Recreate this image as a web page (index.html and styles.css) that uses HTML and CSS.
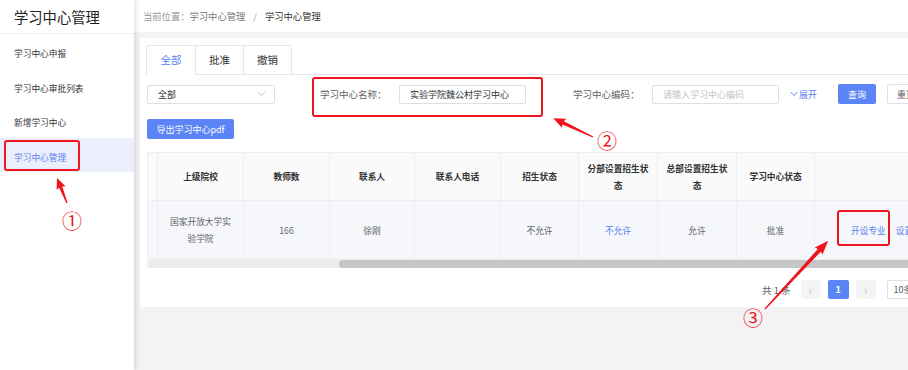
FILE: index.html
```html
<!DOCTYPE html>
<html lang="zh-CN">
<head>
  <meta charset="UTF-8">
  <title>学习中心管理</title>
  <meta name="viewport" content="width=device-width, initial-scale=1.0">
  <link rel="stylesheet" href="styles.css">
</head>
<body>
  <div class="layout">
    <aside class="sidebar">
      <div class="logo">学习中心管理</div>
      <ul class="menu">
        <li>学习中心申报</li>
        <li>学习中心审批列表</li>
        <li>新增学习中心</li>
        <li class="active">学习中心管理</li>
      </ul>
    </aside>

    <div class="main">
      <div class="crumb">
        <span class="crumb-label">当前位置：</span><span class="crumb-link">学习中心管理</span><span class="crumb-sep">/</span><span class="crumb-cur">学习中心管理</span>
      </div>

      <div class="content">
        <div class="card">
          <div class="tabs">
            <div class="tab-group">
              <div class="tab active">全部</div>
              <div class="tab">批准</div>
              <div class="tab">撤销</div>
            </div>
          </div>

          <div class="filters">
            <div class="select">
              <span>全部</span>
              <svg class="chev" width="9" height="6" viewBox="0 0 9 6"><path d="M1 1l3.5 3.5L8 1" fill="none" stroke="#c0c4cc" stroke-width="1"/></svg>
            </div>
            <div class="form-item name">
              <label>学习中心名称：</label>
              <div class="input">实验学院魏公村学习中心</div>
            </div>
            <div class="form-item code">
              <label>学习中心编码：</label>
              <div class="input placeholder">请输入学习中心编码</div>
            </div>
            <a class="expand"><svg width="8" height="6" viewBox="0 0 8 6"><path d="M0.5 1l3.5 3.5L7.5 1" fill="none" stroke="#5a7ef0" stroke-width="1"/></svg>展开</a>
            <button class="btn primary">查询</button>
            <button class="btn plain">重置</button>
          </div>

          <div class="toolbar">
            <button class="btn primary export">导出学习中心pdf</button>
          </div>

          <table class="grid">
            <colgroup>
              <col style="width:10px"><col style="width:86px"><col style="width:86px"><col style="width:85px"><col style="width:86px">
              <col style="width:78px"><col style="width:79px"><col style="width:79px"><col style="width:78px"><col style="width:150px">
            </colgroup>
            <thead>
              <tr>
                <th></th>
                <th>上级院校</th>
                <th>教师数</th>
                <th>联系人</th>
                <th>联系人电话</th>
                <th>招生状态</th>
                <th>分部设置招生状<br>态</th>
                <th>总部设置招生状<br>态</th>
                <th>学习中心状态</th>
                <th></th>
              </tr>
            </thead>
            <tbody>
              <tr>
                <td></td>
                <td>国家开放大学实<br>验学院</td>
                <td>166</td>
                <td>徐刚</td>
                <td></td>
                <td>不允许</td>
                <td><a class="link">不允许</a></td>
                <td>允许</td>
                <td>批准</td>
                <td class="ops"><a class="link">开设专业</a><a class="link">设置招生</a></td>
              </tr>
            </tbody>
          </table>
          <div class="scrollbar"><div class="thumb"></div></div>

          <div class="pager">
            <span class="total">共 1 条</span>
            <span class="pg-btn">&lsaquo;</span>
            <span class="pg-btn current">1</span>
            <span class="pg-btn">&rsaquo;</span>
            <span class="pg-size">10条/页</span>
          </div>
        </div>
      </div>
    </div>
  </div>

  <!-- 标注 -->
  <svg class="annot" width="908" height="370" viewBox="0 0 908 370">
    <g fill="none" stroke="#f0141e" stroke-width="2">
      <rect x="5" y="141" width="74" height="29" rx="2"/>
      <rect x="313" y="78" width="229" height="38" rx="2"/>
      <rect x="838" y="211" width="51" height="34" rx="2"/>
    </g>
    <g fill="#f0141e">
      <polygon transform="translate(67 203) rotate(-111.8)" points="0,-0.6 17,-1.7 16,-4.8 27,0 16,4.8 17,1.7 0,0.6"/>
      <polygon transform="translate(593 137) rotate(-154.6)" points="0,-0.6 33,-1.8 32,-5 44,0 32,5 33,1.8 0,0.6"/>
      <polygon transform="translate(765 309) rotate(-47.2)" points="0,-0.6 80,-2 79,-5.2 93,0 79,5.2 80,2 0,0.6"/>
    </g>
    <g class="num" fill="#f0141e" font-size="20" text-anchor="middle">
      <text x="72" y="229">①</text>
      <text x="607" y="149">②</text>
      <text x="753" y="326">③</text>
    </g>
  </svg>
</body>
</html>
```

FILE: styles.css
```css
:root {
  --primary:#5b84f6;
  --link:#5a7ef0;
  --border:#ebeef5;
  --text:#606266;
  --red:#f0141e;
}
* {box-sizing:border-box;}
html, body {
  margin:0; padding:0;
  width:100%; height:100%;
  overflow:hidden;
}
body {
  font-family:"Noto Sans CJK SC","Noto Sans",sans-serif;
  font-size:9px;
  color:var(--text);
  background:#f3f3f3;
  position:relative;
}
.layout {display:flex; height:100%;}

/* sidebar */
.sidebar {
  width:134px; flex:none;
  background:#fff;
  box-shadow:2px 0 5px rgba(0,0,0,0.12);
  position:relative; z-index:2;
}
.logo {
  height:34px; line-height:33px;
  padding-left:14px;
  font-size:14.3px; color:#222;
  border-bottom:1px solid #eee;
}
.menu {list-style:none; margin:0; padding:0;}
.menu li {
  height:34.5px;
  padding:6px 0 0 14px;
  line-height:28.5px;
  font-size:8.7px; color:#333;
}
.menu li.active {background:#ebeffc; color:var(--link);}

/* main */
.main {flex:1; min-width:0; display:flex; flex-direction:column;}
.crumb {
  height:32px; line-height:32px;
  padding-left:9px;
  background:#fff;
  font-size:9.3px;
}
.crumb-label {color:#999;}
.crumb-link {color:#777;}
.crumb-sep {color:#aaa; margin:0 8px;}
.crumb-cur {color:#333;}
.content {padding:6px 0 0 6px;}
.card {
  width:880px;
  background:#fff;
  padding:7px 0 8px 7px;
}

/* tabs */
.tabs {display:flex; border-bottom:1px solid #e4e7ed; margin-left:-1px;}
.tab-group {
  display:flex;
  border:1px solid #e4e7ed; border-bottom:none;
  border-radius:3px 3px 0 0;
  margin-bottom:-1px;
}
.tab {
  width:48px; height:29px; line-height:28px;
  text-align:center;
  font-size:10.5px; color:#303133;
  border-bottom:1px solid #e4e7ed;
}
.tab + .tab {border-left:1px solid #e4e7ed;}
.tab.active {color:var(--link); border-bottom-color:#fff;}

/* filters */
.filters {display:flex; align-items:center; margin-top:9px; height:20px;}
.select, .input {
  height:19px;
  border:1px solid #dcdfe6; border-radius:2px;
  display:flex; align-items:center;
  padding-left:10px;
  font-size:9px; color:#333;
}
.select {width:128px; justify-content:space-between; padding-right:8px;}
.input {width:127px;}
.input.placeholder {color:#c0c4cc;}
.form-item {display:flex; align-items:center;}
.form-item label {width:79px; font-size:9.5px; color:var(--text);}
.form-item.name {margin-left:45px;}
.form-item.code {margin-left:47px;}
.expand {
  margin-left:11px;
  display:flex; align-items:center; gap:1px;
  color:var(--link); font-size:9px;
}
.btn {
  height:20px; width:38px;
  border:none; border-radius:2px;
  font-family:inherit; font-size:9px;
  padding:0; cursor:pointer;
}
.btn.primary {background:var(--primary); color:#fff;}
.btn.plain {background:#fff; color:var(--text); border:1px solid #dcdfe6; margin-left:11px;}
.filters .btn.primary {margin-left:21px;}
.toolbar {margin-top:15px; height:20px; display:flex;}
.btn.export {width:87px;}

/* table */
.grid {
  margin-top:13px;
  border-collapse:collapse;
  table-layout:fixed;
  width:807px;
  font-size:8.7px;
}
.grid th, .grid td {
  border:1px solid var(--border);
  text-align:center;
  padding:0;
  line-height:17px;
}
.grid th {height:48px; background:#fafafa; color:#333; font-weight:600;}
.grid td {height:59px; background:#f5f7fa; color:var(--text);}
.grid td.ops {text-align:left; padding-left:36px;}
.link {color:var(--link);}
.ops .link + .link {margin-left:10px;}
.scrollbar {
  width:807px; height:8px;
  background:#ececec;
  border-radius:4px 0 0 4px;
  padding-left:192px;
}
.thumb {height:8px; background:#c6c6c6; border-radius:4px;}

/* pager */
.pager {display:flex; align-items:center; margin:12px 0 0 615px; height:19px;}
.total {font-size:9.5px; color:var(--text); margin-right:10px;}
.pg-btn {
  width:20px; height:19px;
  display:flex; align-items:center; justify-content:center;
  background:#f4f4f5; color:#c0c4cc;
  font-size:12px; border-radius:2px;
  margin-right:7px;
}
.pg-btn.current {background:var(--primary); color:#fff; font-size:9px; font-weight:bold; width:21px;}
.pg-size {
  margin-left:4px;
  height:19px; width:72px;
  border:1px solid #dcdfe6; border-radius:2px;
  padding-left:6px; line-height:17px;
  font-size:9px; color:var(--text);
}

/* annotations over the page */
.annot {position:absolute; left:0; top:0; pointer-events:none; z-index:5;}
.num {font-family:"Noto Sans CJK SC","DejaVu Sans",sans-serif;}
```
